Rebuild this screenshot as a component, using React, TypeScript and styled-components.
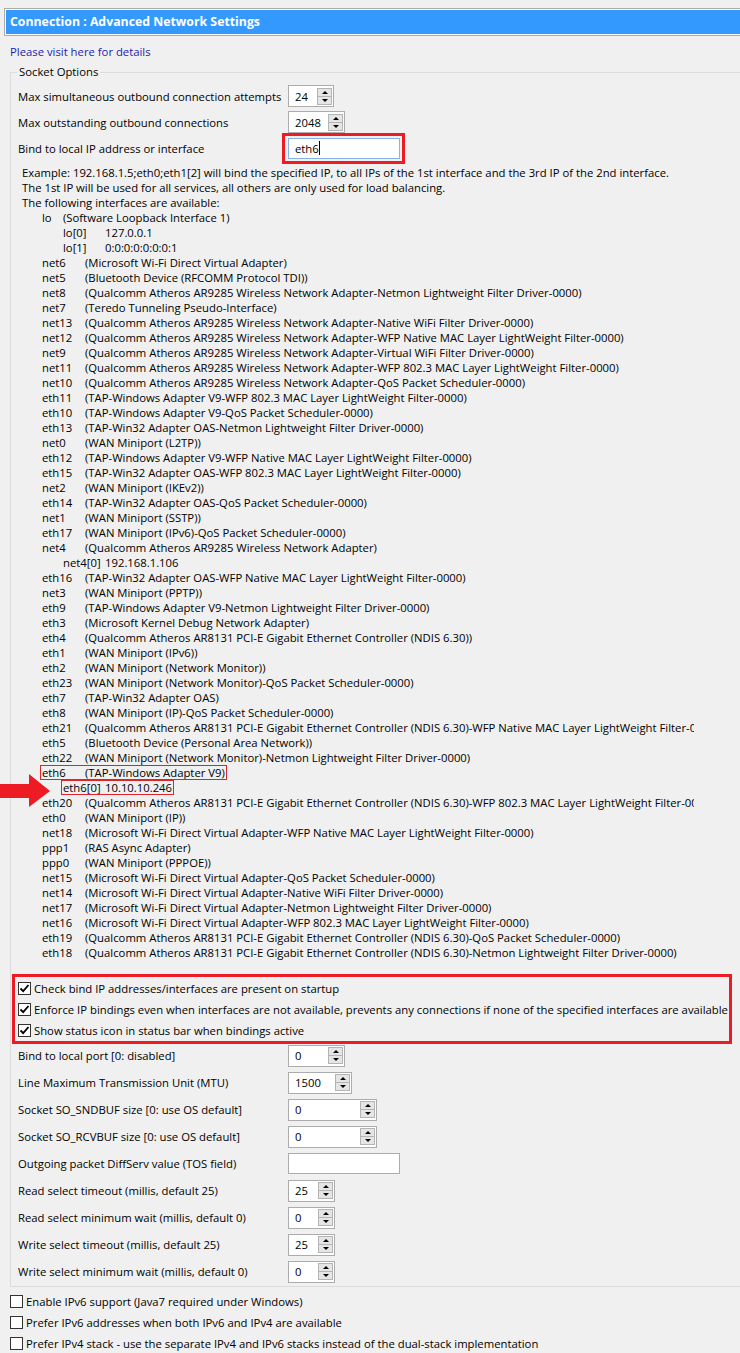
import React from 'react';
import styled, { createGlobalStyle } from 'styled-components';

type Iface = {
  name: string;
  desc: string;
  subs?: [string, string][];
  marked?: boolean;
};

type Field =
  | { kind: 'spin'; label: string; value: string; width: number }
  | { kind: 'text'; label: string; value: string; width: number };

const interfaces: Iface[] = [
  { name: 'lo', desc: '(Software Loopback Interface 1)', subs: [['lo[0]', '127.0.0.1'], ['lo[1]', '0:0:0:0:0:0:0:1']] },
  { name: 'net6', desc: '(Microsoft Wi-Fi Direct Virtual Adapter)' },
  { name: 'net5', desc: '(Bluetooth Device (RFCOMM Protocol TDI))' },
  { name: 'net8', desc: '(Qualcomm Atheros AR9285 Wireless Network Adapter-Netmon Lightweight Filter Driver-0000)' },
  { name: 'net7', desc: '(Teredo Tunneling Pseudo-Interface)' },
  { name: 'net13', desc: '(Qualcomm Atheros AR9285 Wireless Network Adapter-Native WiFi Filter Driver-0000)' },
  { name: 'net12', desc: '(Qualcomm Atheros AR9285 Wireless Network Adapter-WFP Native MAC Layer LightWeight Filter-0000)' },
  { name: 'net9', desc: '(Qualcomm Atheros AR9285 Wireless Network Adapter-Virtual WiFi Filter Driver-0000)' },
  { name: 'net11', desc: '(Qualcomm Atheros AR9285 Wireless Network Adapter-WFP 802.3 MAC Layer LightWeight Filter-0000)' },
  { name: 'net10', desc: '(Qualcomm Atheros AR9285 Wireless Network Adapter-QoS Packet Scheduler-0000)' },
  { name: 'eth11', desc: '(TAP-Windows Adapter V9-WFP 802.3 MAC Layer LightWeight Filter-0000)' },
  { name: 'eth10', desc: '(TAP-Windows Adapter V9-QoS Packet Scheduler-0000)' },
  { name: 'eth13', desc: '(TAP-Win32 Adapter OAS-Netmon Lightweight Filter Driver-0000)' },
  { name: 'net0', desc: '(WAN Miniport (L2TP))' },
  { name: 'eth12', desc: '(TAP-Windows Adapter V9-WFP Native MAC Layer LightWeight Filter-0000)' },
  { name: 'eth15', desc: '(TAP-Win32 Adapter OAS-WFP 802.3 MAC Layer LightWeight Filter-0000)' },
  { name: 'net2', desc: '(WAN Miniport (IKEv2))' },
  { name: 'eth14', desc: '(TAP-Win32 Adapter OAS-QoS Packet Scheduler-0000)' },
  { name: 'net1', desc: '(WAN Miniport (SSTP))' },
  { name: 'eth17', desc: '(WAN Miniport (IPv6)-QoS Packet Scheduler-0000)' },
  { name: 'net4', desc: '(Qualcomm Atheros AR9285 Wireless Network Adapter)', subs: [['net4[0]', '192.168.1.106']] },
  { name: 'eth16', desc: '(TAP-Win32 Adapter OAS-WFP Native MAC Layer LightWeight Filter-0000)' },
  { name: 'net3', desc: '(WAN Miniport (PPTP))' },
  { name: 'eth9', desc: '(TAP-Windows Adapter V9-Netmon Lightweight Filter Driver-0000)' },
  { name: 'eth3', desc: '(Microsoft Kernel Debug Network Adapter)' },
  { name: 'eth4', desc: '(Qualcomm Atheros AR8131 PCI-E Gigabit Ethernet Controller (NDIS 6.30))' },
  { name: 'eth1', desc: '(WAN Miniport (IPv6))' },
  { name: 'eth2', desc: '(WAN Miniport (Network Monitor))' },
  { name: 'eth23', desc: '(WAN Miniport (Network Monitor)-QoS Packet Scheduler-0000)' },
  { name: 'eth7', desc: '(TAP-Win32 Adapter OAS)' },
  { name: 'eth8', desc: '(WAN Miniport (IP)-QoS Packet Scheduler-0000)' },
  { name: 'eth21', desc: '(Qualcomm Atheros AR8131 PCI-E Gigabit Ethernet Controller (NDIS 6.30)-WFP Native MAC Layer LightWeight Filter-0000)' },
  { name: 'eth5', desc: '(Bluetooth Device (Personal Area Network))' },
  { name: 'eth22', desc: '(WAN Miniport (Network Monitor)-Netmon Lightweight Filter Driver-0000)' },
  { name: 'eth6', desc: '(TAP-Windows Adapter V9)', subs: [['eth6[0]', '10.10.10.246']], marked: true },
  { name: 'eth20', desc: '(Qualcomm Atheros AR8131 PCI-E Gigabit Ethernet Controller (NDIS 6.30)-WFP 802.3 MAC Layer LightWeight Filter-0000)' },
  { name: 'eth0', desc: '(WAN Miniport (IP))' },
  { name: 'net18', desc: '(Microsoft Wi-Fi Direct Virtual Adapter-WFP Native MAC Layer LightWeight Filter-0000)' },
  { name: 'ppp1', desc: '(RAS Async Adapter)' },
  { name: 'ppp0', desc: '(WAN Miniport (PPPOE))' },
  { name: 'net15', desc: '(Microsoft Wi-Fi Direct Virtual Adapter-QoS Packet Scheduler-0000)' },
  { name: 'net14', desc: '(Microsoft Wi-Fi Direct Virtual Adapter-Native WiFi Filter Driver-0000)' },
  { name: 'net17', desc: '(Microsoft Wi-Fi Direct Virtual Adapter-Netmon Lightweight Filter Driver-0000)' },
  { name: 'net16', desc: '(Microsoft Wi-Fi Direct Virtual Adapter-WFP 802.3 MAC Layer LightWeight Filter-0000)' },
  { name: 'eth19', desc: '(Qualcomm Atheros AR8131 PCI-E Gigabit Ethernet Controller (NDIS 6.30)-QoS Packet Scheduler-0000)' },
  { name: 'eth18', desc: '(Qualcomm Atheros AR8131 PCI-E Gigabit Ethernet Controller (NDIS 6.30)-Netmon Lightweight Filter Driver-0000)' },
];

const lowerFields: Field[] = [
  { kind: 'spin', label: 'Bind to local port [0: disabled]', value: '0', width: 57 },
  { kind: 'spin', label: 'Line Maximum Transmission Unit (MTU)', value: '1500', width: 64 },
  { kind: 'spin', label: 'Socket SO_SNDBUF size [0: use OS default]', value: '0', width: 89 },
  { kind: 'spin', label: 'Socket SO_RCVBUF size [0: use OS default]', value: '0', width: 89 },
  { kind: 'text', label: 'Outgoing packet DiffServ value (TOS field)', value: '', width: 112 },
  { kind: 'spin', label: 'Read select timeout (millis, default 25)', value: '25', width: 47 },
  { kind: 'spin', label: 'Read select minimum wait (millis, default 0)', value: '0', width: 47 },
  { kind: 'spin', label: 'Write select timeout (millis, default 25)', value: '25', width: 47 },
  { kind: 'spin', label: 'Write select minimum wait (millis, default 0)', value: '0', width: 47 },
];

const bindChecks = [
  'Check bind IP addresses/interfaces are present on startup',
  'Enforce IP bindings even when interfaces are not available, prevents any connections if none of the specified interfaces are available',
  'Show status icon in status bar when bindings active',
];

const ipv6Checks = [
  'Enable IPv6 support (Java7 required under Windows)',
  'Prefer IPv6 addresses when both IPv6 and IPv4 are available',
  'Prefer IPv4 stack - use the separate IPv4 and IPv6 stacks instead of the dual-stack implementation',
];

const Spinner = ({ value, width }: { value: string; width: number }) => (
  <SpinBox $w={width}>
    <SpinValue>{value}</SpinValue>
    <SpinButtons>
      <SpinButton>
        <Triangle $up />
      </SpinButton>
      <SpinButton>
        <Triangle />
      </SpinButton>
    </SpinButtons>
  </SpinBox>
);

const Checkbox = ({ checked }: { checked?: boolean }) => (
  <CheckBox>
    {checked && (
      <svg width='11' height='11' viewBox='0 0 11 11'>
        <path d='M1.5 5.5 L4.2 8.2 L9.5 2' fill='none' stroke='#000' strokeWidth='1.8' />
      </svg>
    )}
  </CheckBox>
);

const RedArrow = () => (
  <ArrowMark width='51' height='35' viewBox='0 0 51 35'>
    <polygon points='0,11 29,11 29,1 50,18 29,34 29,25 0,25' fill='#ed1c24' />
  </ArrowMark>
);

const renderField = (f: Field) => (
  <FieldRow key={f.label} $h={27}>
    <FieldLabel>{f.label}</FieldLabel>
    {f.kind === 'spin' ? <Spinner value={f.value} width={f.width} /> : <TextBox $w={f.width}>{f.value}</TextBox>}
  </FieldRow>
);

const App = () => {
  return (
    <>
      <GlobalStyle />
      <Header>
        <HeaderTitle>Connection : Advanced Network Settings</HeaderTitle>
      </Header>
      <DetailsLink>Please visit here for details</DetailsLink>
      <Group>
        <Legend>Socket Options</Legend>
        <GroupBody>
          <FieldRow $h={26}>
            <FieldLabel>Max simultaneous outbound connection attempts</FieldLabel>
            <Spinner value='24' width={46} />
          </FieldRow>
          <FieldRow $h={26}>
            <FieldLabel>Max outstanding outbound connections</FieldLabel>
            <Spinner value='2048' width={57} />
          </FieldRow>
          <FieldRow $h={26}>
            <FieldLabel>Bind to local IP address or interface</FieldLabel>
            <Marked>
              <TextBox $w={112} $focused>
                eth6
                <Caret />
              </TextBox>
            </Marked>
          </FieldRow>

          <InfoBlock>
            <InfoLine>
              Example: 192.168.1.5;eth0;eth1[2] will bind the specified IP, to all IPs of the 1st interface and the 3rd IP of the 2nd interface.
            </InfoLine>
            <InfoLine>The 1st IP will be used for all services, all others are only used for load balancing.</InfoLine>
            <InfoLine>The following interfaces are available:</InfoLine>
            {interfaces.map((it) => (
              <React.Fragment key={it.name}>
                <IfaceRow $indent={20}>
                  <IfaceEntry $marked={it.marked}>
                    <IfName $w={it.name === 'lo' ? 21 : 43}>{it.name}</IfName>
                    <span>{it.desc}</span>
                  </IfaceEntry>
                </IfaceRow>
                {it.subs?.map(([sub, ip]) => (
                  <PointerSlot key={sub}>
                    {it.marked && <RedArrow />}
                    <IfaceRow $indent={41}>
                      <IfaceEntry $marked={it.marked}>
                        <IfName $w={42}>{sub}</IfName>
                        <span>{ip}</span>
                      </IfaceEntry>
                    </IfaceRow>
                  </PointerSlot>
                ))}
              </React.Fragment>
            ))}
          </InfoBlock>

          <Highlight>
            {bindChecks.map((c) => (
              <CheckRow key={c} $h={21}>
                <Checkbox checked />
                <CheckText>{c}</CheckText>
              </CheckRow>
            ))}
          </Highlight>

          {lowerFields.map(renderField)}
        </GroupBody>
      </Group>

      <BottomChecks>
        {ipv6Checks.map((c) => (
          <CheckRow key={c} $h={21}>
            <Checkbox />
            <CheckText>{c}</CheckText>
          </CheckRow>
        ))}
      </BottomChecks>
    </>
  );
};

export default App;

const GlobalStyle = createGlobalStyle`
  html, body {
    margin: 0;
    padding: 0;
    background: #f0f0f0;
    overflow-x: hidden;
  }
  body {
    font-family: 'Open Sans', 'Noto Sans', sans-serif;
    font-size: 11.3px;
    color: #000;
  }
`;

const Header = styled.div`
  margin: 8px -20px 0 4px;
  border: 1px solid #acacac;
  padding: 1px;
  background: #fff;
`;

const HeaderTitle = styled.div`
  height: 24px;
  line-height: 24px;
  padding-left: 4px;
  background: #3399ff;
  color: #fff;
  font-weight: 700;
  font-size: 12.3px;
`;

const DetailsLink = styled.a`
  display: block;
  margin: 8px 0 0 10px;
  line-height: 16px;
  color: #1c1cb4;
  cursor: pointer;
`;

const Group = styled.fieldset`
  margin: 4px -20px 0 10px;
  padding: 0;
  min-width: 0;
  border: 1px solid #dcdcdc;
`;

const Legend = styled.legend`
  margin-left: 6px;
  padding: 0 2px;
  line-height: 16px;
`;

const GroupBody = styled.div`
  padding: 3px 0 1px 7px;
`;

const FieldRow = styled.div<{ $h: number }>`
  display: flex;
  align-items: center;
  height: ${(p) => p.$h}px;
`;

const FieldLabel = styled.div`
  flex: 0 0 270px;
  white-space: nowrap;
`;

const SpinBox = styled.div<{ $w: number }>`
  display: flex;
  align-items: center;
  box-sizing: border-box;
  width: ${(p) => p.$w}px;
  height: 22px;
  padding: 0 1px 0 6px;
  border: 1px solid #acacac;
  background: #fff;
`;

const SpinValue = styled.span`
  flex: 1;
`;

const SpinButtons = styled.div`
  display: flex;
  flex-direction: column;
  width: 15px;
`;

const SpinButton = styled.div`
  display: flex;
  align-items: center;
  justify-content: center;
  box-sizing: border-box;
  height: 9px;
  background: #e5e5e5;
  border: 1px solid #b4b4b4;
  & + & {
    margin-top: -1px;
  }
`;

const Triangle = styled.span<{ $up?: boolean }>`
  width: 0;
  height: 0;
  border-left: 3px solid transparent;
  border-right: 3px solid transparent;
  ${(p) => (p.$up ? 'border-bottom: 3px solid #000;' : 'border-top: 3px solid #000;')}
`;

const TextBox = styled.div<{ $w: number; $focused?: boolean }>`
  display: flex;
  align-items: center;
  box-sizing: border-box;
  width: ${(p) => p.$w}px;
  height: 21px;
  padding-left: 6px;
  border: 1px solid ${(p) => (p.$focused ? '#86b3e3' : '#acacac')};
  background: #fff;
`;

const Caret = styled.span`
  width: 1px;
  height: 14px;
  background: #000;
`;

const Marked = styled.div`
  display: flex;
  margin-left: -6px;
  padding: 2px 2px 2px 3px;
  border: 3px solid #ed1c24;
`;

const InfoBlock = styled.div`
  margin-top: 4px;
  padding-left: 4px;
`;

const InfoLine = styled.div`
  line-height: 15px;
  white-space: nowrap;
`;

const IfaceRow = styled.div<{ $indent: number }>`
  width: 672px;
  box-sizing: border-box;
  padding-left: ${(p) => p.$indent}px;
  line-height: 15px;
  white-space: nowrap;
  overflow: hidden;
`;

const IfaceEntry = styled.div<{ $marked?: boolean }>`
  display: inline-flex;
  ${(p) =>
    p.$marked &&
    `
    margin-left: -2px;
    padding: 0 2px;
    outline: 1px solid #e0232b;
    outline-offset: -1px;
  `}
`;

const IfName = styled.span<{ $w: number }>`
  flex: 0 0 auto;
  min-width: ${(p) => p.$w}px;
`;

const PointerSlot = styled.div`
  position: relative;
`;

const ArrowMark = styled.svg`
  position: absolute;
  left: -22px;
  top: -7px;
`;

const Highlight = styled.div`
  width: 720px;
  box-sizing: border-box;
  margin: 14px 0 -2px -6px;
  padding: 1px 0 0 3px;
  border: 3px solid #ed1c24;
`;

const CheckRow = styled.div<{ $h: number }>`
  display: flex;
  align-items: center;
  gap: 3px;
  height: ${(p) => p.$h}px;
`;

const CheckBox = styled.span`
  display: flex;
  align-items: center;
  justify-content: center;
  box-sizing: border-box;
  width: 13px;
  height: 13px;
  border: 1px solid #333;
  background: #fff;
`;

const CheckText = styled.span`
  white-space: nowrap;
`;

const BottomChecks = styled.div`
  margin: 4px 0 0 10px;
`;
